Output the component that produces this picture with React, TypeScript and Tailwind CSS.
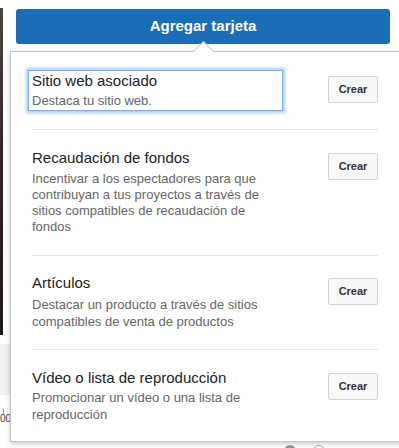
import React from 'react';

interface CardOption {
  title: string;
  description: string;
  focused?: boolean;
  pt: string;
  pb: string;
  descMt: string;
  leading: string;
}

const options: CardOption[] = [
  {
    title: 'Sitio web asociado',
    description: 'Destaca tu sitio web.',
    focused: true,
    pt: 'pt-[18px]',
    pb: 'pb-[18px]',
    descMt: 'mt-[2px]',
    leading: 'leading-[17px]',
  },
  {
    title: 'Recaudación de fondos',
    description:
      'Incentivar a los espectadores para que contribuyan a tus proyectos a través de sitios compatibles de recaudación de fondos',
    pt: 'pt-[17px]',
    pb: 'pb-[18px]',
    descMt: 'mt-[4px]',
    leading: 'leading-[16px]',
  },
  {
    title: 'Artículos',
    description: 'Destacar un producto a través de sitios compatibles de venta de productos',
    pt: 'pt-[16px]',
    pb: 'pb-[17px]',
    descMt: 'mt-[4px]',
    leading: 'leading-[17px]',
  },
  {
    title: 'Vídeo o lista de reproducción',
    description: 'Promocionar un vídeo o una lista de reproducción',
    pt: 'pt-[17px]',
    pb: 'pb-[16px]',
    descMt: 'mt-[2px]',
    leading: 'leading-[17px]',
  },
];

export default function App() {
  return (
    <div className="relative flex h-[448px] w-[399px] overflow-hidden bg-white font-['Liberation_Sans',Arial,sans-serif]">
      {/* Page behind the popover */}
      <div className="flex w-[10px] shrink-0 flex-col">
        <div className="mt-[8px] h-[327px] w-[3px] bg-gradient-to-b from-[#4a463a] via-[#35202c] to-[#1c1612]" />
        <div className="mt-[9px] h-[51px] w-full bg-[#efefef]" />
        <div className="ml-[3px] mt-[14px] h-[5px] w-px bg-[#999]" />
        <div className="text-[10px] leading-[10px] text-[#444]">00</div>
      </div>

      <div className="flex flex-1 flex-col pl-[6px] pt-[9px]">
        <button className="h-[35px] w-[374px] rounded-[3px] bg-[#1b6db5] text-[15px] font-bold text-white">
          Agregar tarjeta
        </button>
        <div className="mt-auto flex gap-[17px] pl-[268px]">
          <div className="h-[12px] w-[12px] translate-y-[9px] rounded-full bg-[#999]" />
          <div className="h-[12px] w-[12px] translate-y-[9px] rounded-full border border-[#aaa]" />
        </div>
      </div>

      {/* Popover */}
      <div className="absolute left-[10px] top-[51px] h-[391px] w-[400px] border border-[#c6c6c6] bg-white pl-[21px] shadow-[0_2px_5px_rgba(0,0,0,0.2)]">
        <div className="absolute left-[185px] top-[-8px] h-[15px] w-[15px] rotate-45 border-l border-t border-[#c6c6c6] bg-white" />
        <div className="relative flex w-[346px] flex-col">
          {options.map((option, i) => (
            <div
              key={option.title}
              className={`flex justify-between ${option.pt} ${option.pb} ${
                i < options.length - 1 ? 'border-b border-[#e5e5e5]' : ''
              }`}
            >
              <div
                className={`-ml-[4px] w-[255px] border px-[3px] py-px ${
                  option.focused
                    ? 'border-[#7aaef0] shadow-[0_0_3px_2px_rgba(110,167,240,0.6)]'
                    : 'border-transparent'
                }`}
              >
                <div className="text-[15px] leading-[18px] text-[#222]">{option.title}</div>
                <div className={`${option.descMt} w-[247px] text-[13px] ${option.leading} text-[#666]`}>
                  {option.description}
                </div>
              </div>
              <button className="mt-[6px] h-[27px] w-[50px] rounded-[2px] border border-[#d3d3d3] bg-[#f8f8f8] text-[11px] font-bold text-[#333]">
                Crear
              </button>
            </div>
          ))}
        </div>
      </div>
    </div>
  );
}
